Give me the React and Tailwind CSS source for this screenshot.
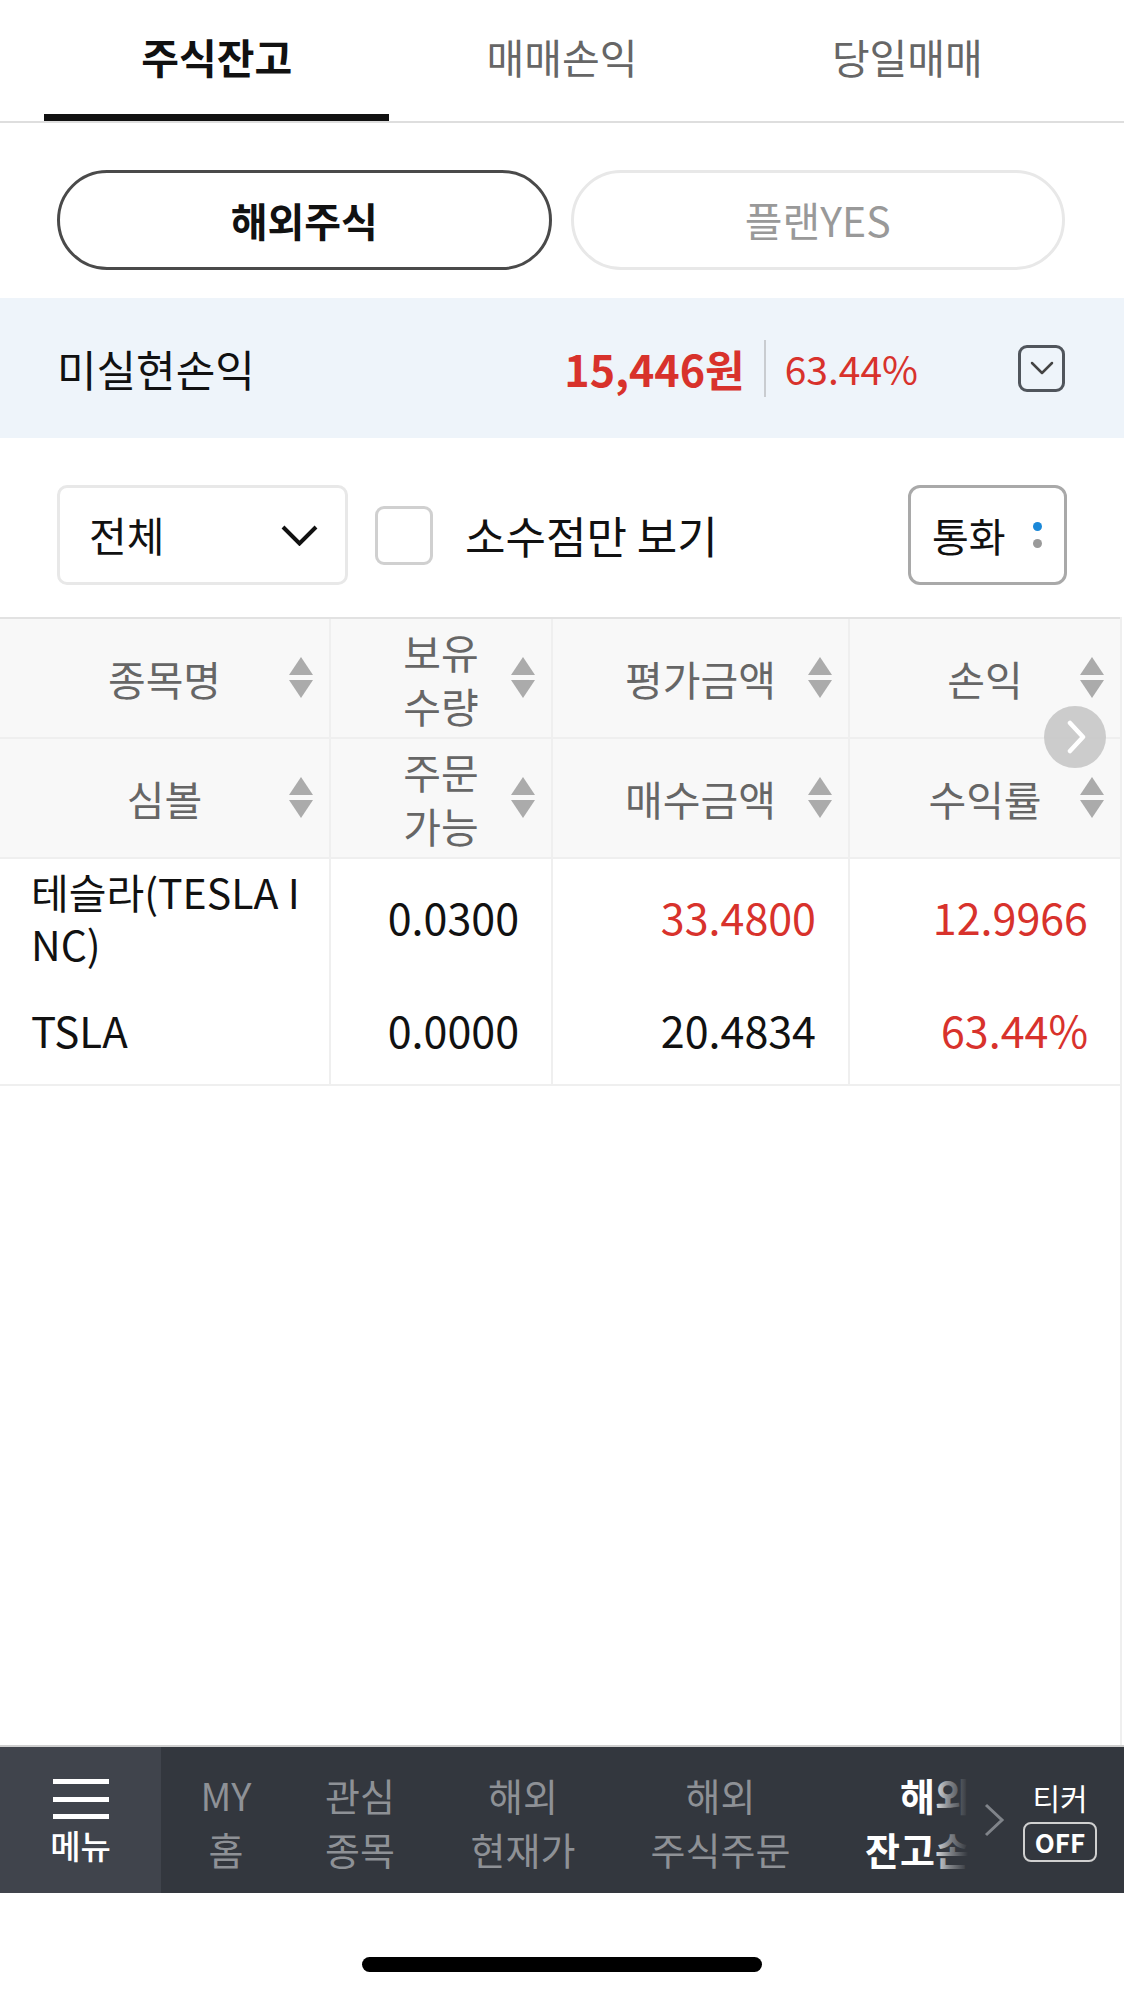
import React from 'react';

const FONT = "font-['Noto_Sans_CJK_KR','Noto_Sans',sans-serif]";

const SortIcon = () => (
  <svg width="24" height="42" viewBox="0 0 24 42" className="absolute right-[16px] top-1/2 -translate-y-1/2">
    <polygon points="12,0 24,18 0,18" fill="#ababab" />
    <polygon points="0,23 24,23 12,41" fill="#ababab" />
  </svg>
);

const HeadCell = ({ lines, last }) => (
  <div
    className={`relative flex flex-col items-center justify-center text-[41px] leading-[54px] text-[#666] ${
      last ? '' : 'border-r-2 border-[#efefef]'
    }`}
  >
    {lines.map((l) => (
      <span key={l}>{l}</span>
    ))}
    <SortIcon />
  </div>
);

const NumCell = ({ value, red, last }) => (
  <div
    className={`flex items-center justify-end pr-[32px] pb-[6px] text-[43px] ${red ? 'text-[#d8322c]' : 'text-[#111]'} ${
      last ? '' : 'border-r-2 border-[#efefef]'
    }`}
  >
    {value}
  </div>
);

// bottom quick menu, widths keep each label centred in its slot
const navItems = [
  { top: 'MY', bottom: '홈', cls: 'w-[50px]' },
  { top: '관심', bottom: '종목', cls: 'w-[68px] ml-[75px]' },
  { top: '해외', bottom: '현재가', cls: 'w-[100px] ml-[79px]' },
  { top: '해외', bottom: '주식주문', cls: 'w-[137px] ml-[79px]' },
];

export default function App() {
  return (
    <div className={`${FONT} w-[1124px] h-[1995px] bg-white flex flex-col overflow-hidden`}>
      {/* top tabs */}
      <div className="h-[123px] border-b-2 border-[#dedede] px-[44px] flex">
        <div className="flex-1 flex items-center justify-center border-b-[7px] border-[#111] text-[41px] font-bold text-[#111]">
          주식잔고
        </div>
        <div className="flex-1 flex items-center justify-center border-b-[7px] border-transparent text-[41px] text-[#666]">
          매매손익
        </div>
        <div className="flex-1 flex items-center justify-center border-b-[7px] border-transparent text-[41px] text-[#666]">
          당일매매
        </div>
      </div>

      {/* segment */}
      <div className="h-[175px] pt-[47px] pl-[57px] pr-[59px] flex gap-[19px]">
        <div className="flex-1 h-[100px] rounded-full border-[3px] border-[#4a4a4a] flex items-center justify-center text-[40px] font-bold text-[#111]">
          해외주식
        </div>
        <div className="flex-1 h-[100px] rounded-full border-[3px] border-[#e8e8e8] flex items-center justify-center text-[41px] text-[#999]">
          플랜YES
        </div>
      </div>

      {/* unrealized P/L */}
      <div className="h-[140px] bg-[#eef4fa] pl-[57px] pr-[59px] flex items-center">
        <span className="text-[43px] text-[#111]">미실현손익</span>
        <div className="ml-auto flex items-center">
          <span className="text-[43px] font-bold text-[#d8322c]">15,446원</span>
          <span className="w-[2px] h-[57px] bg-[#c9ccd0] mx-[19px]" />
          <span className="text-[39px] text-[#d8322c]">63.44%</span>
          <div className="ml-[100px] w-[47px] h-[47px] rounded-[9px] border-[3px] border-[#50555c] flex items-center justify-center">
            <svg width="24" height="14" viewBox="0 0 24 14">
              <polyline points="2,2 12,12 22,2" fill="none" stroke="#444" strokeWidth="2.5" strokeLinecap="round" strokeLinejoin="round" />
            </svg>
          </div>
        </div>
      </div>

      {/* filters */}
      <div className="h-[179px] pt-[47px] pl-[57px] pr-[57px]">
        <div className="h-[100px] flex items-center">
          <div className="w-[291px] h-[100px] border-[3px] border-[#e8e8e8] rounded-[10px] flex items-center justify-between pl-[29px] pr-[27px]">
            <span className="text-[41px] text-[#111]">전체</span>
            <svg width="37" height="21" viewBox="0 0 37 21">
              <polyline points="2,2 18.5,18.5 35,2" fill="none" stroke="#111" strokeWidth="4" />
            </svg>
          </div>
          <div className="ml-[27px] w-[58px] h-[59px] border-[3px] border-[#d0d0d0] rounded-[9px]" />
          <span className="ml-[32px] text-[44px] text-[#111]">소수점만 보기</span>
          <div className="ml-auto w-[159px] h-[100px] border-[3px] border-[#a9a9a9] rounded-[12px] flex items-center pl-[21px]">
            <span className="text-[40px] text-[#111]">통화</span>
            <div className="ml-[27px] flex flex-col gap-[8px]">
              <span className="w-[9px] h-[9px] rounded-full bg-[#1a88d8]" />
              <span className="w-[9px] h-[9px] rounded-full bg-[#9a9a9a]" />
            </div>
          </div>
        </div>
      </div>

      {/* balance table */}
      <div className="relative flex-1 w-[1122px] border-r-2 border-[#efefef]">
        <div className="border-t-2 border-[#e2e2e2] bg-[#f8f8f8]">
          <div className="h-[120px] grid grid-cols-[331px_222px_297px_1fr] border-b-2 border-[#efefef]">
            <HeadCell lines={['종목명']} />
            <HeadCell lines={['보유', '수량']} />
            <HeadCell lines={['평가금액']} />
            <HeadCell lines={['손익']} last />
          </div>
          <div className="h-[120px] grid grid-cols-[331px_222px_297px_1fr] border-b-2 border-[#efefef]">
            <HeadCell lines={['심볼']} />
            <HeadCell lines={['주문', '가능']} />
            <HeadCell lines={['매수금액']} />
            <HeadCell lines={['수익률']} last />
          </div>
        </div>

        <div className="border-b-2 border-[#efefef]">
          <div className="h-[121px] grid grid-cols-[331px_222px_297px_1fr]">
            <div className="flex flex-col justify-center pl-[31px] pb-[6px] text-[41px] leading-[52px] text-[#111] border-r-2 border-[#efefef]">
              <span>테슬라(TESLA I</span>
              <span>NC)</span>
            </div>
            <NumCell value="0.0300" />
            <NumCell value="33.4800" red />
            <NumCell value="12.9966" red last />
          </div>
          <div className="h-[104px] grid grid-cols-[331px_222px_297px_1fr]">
            <div className="flex items-center pl-[31px] pb-[6px] text-[42px] text-[#111] border-r-2 border-[#efefef]">TSLA</div>
            <NumCell value="0.0000" />
            <NumCell value="20.4834" />
            <NumCell value="63.44%" red last />
          </div>
        </div>

        {/* horizontal scroll hint */}
        <div className="absolute right-[14px] top-[89px] w-[62px] h-[62px] rounded-full bg-[#c4c4c4]/85 flex items-center justify-center">
          <svg width="22" height="34" viewBox="0 0 22 34" className="ml-[4px]">
            <polyline points="4,3 17,17 4,31" fill="none" stroke="#fff" strokeWidth="4.5" strokeLinecap="round" strokeLinejoin="round" />
          </svg>
        </div>
      </div>

      {/* bottom nav */}
      <div className="border-t-2 border-[#cfcfcf] h-[148px] bg-[#33373e] flex">
        <div className="w-[161px] bg-[#40444c] flex flex-col items-center justify-center">
          <div className="flex flex-col gap-[12.5px]">
            <span className="block w-[56px] h-[5px] bg-white" />
            <span className="block w-[56px] h-[5px] bg-white" />
            <span className="block w-[56px] h-[5px] bg-white" />
          </div>
          <span className="mt-[10px] text-[33px] leading-[32px] font-medium text-white">메뉴</span>
        </div>

        <div className="relative w-[807px] overflow-hidden">
          <div className="h-full flex items-center pl-[40px] pt-[4px] whitespace-nowrap">
            {navItems.map((it, i) => (
              <div key={i} className={`${it.cls} shrink-0 flex flex-col items-center text-[38px] leading-[54px] text-[#8e9196]`}>
                <span>{it.top}</span>
                <span>{it.bottom}</span>
              </div>
            ))}
            <div className="w-[136px] ml-[78px] shrink-0 flex flex-col items-center text-[38px] leading-[54px] font-bold text-white">
              <span>해외</span>
              <span>잔고손익</span>
            </div>
          </div>
          <div className="absolute right-0 top-0 h-full w-[38px] bg-linear-to-r from-transparent via-[#33373e]/60 to-[#33373e]" />
        </div>

        <div className="ml-[15px] flex items-center">
          <svg width="22" height="34" viewBox="0 0 22 34">
            <polyline points="3,2 19,17 3,32" fill="none" stroke="#80848a" strokeWidth="3" />
          </svg>
        </div>

        <div className="ml-[18px] flex flex-col items-center justify-center pt-[2px]">
          <span className="text-[30px] leading-[34px] text-white">티커</span>
          <span className="mt-[8px] w-[74px] h-[40px] border-2 border-[#d0d0d0] rounded-[8px] flex items-center justify-center text-[26px] font-bold leading-none text-white">
            OFF
          </span>
        </div>
      </div>

      {/* home indicator */}
      <div className="h-[102px] flex justify-center pt-[64px]">
        <span className="block w-[400px] h-[15px] rounded-full bg-black" />
      </div>
    </div>
  );
}
